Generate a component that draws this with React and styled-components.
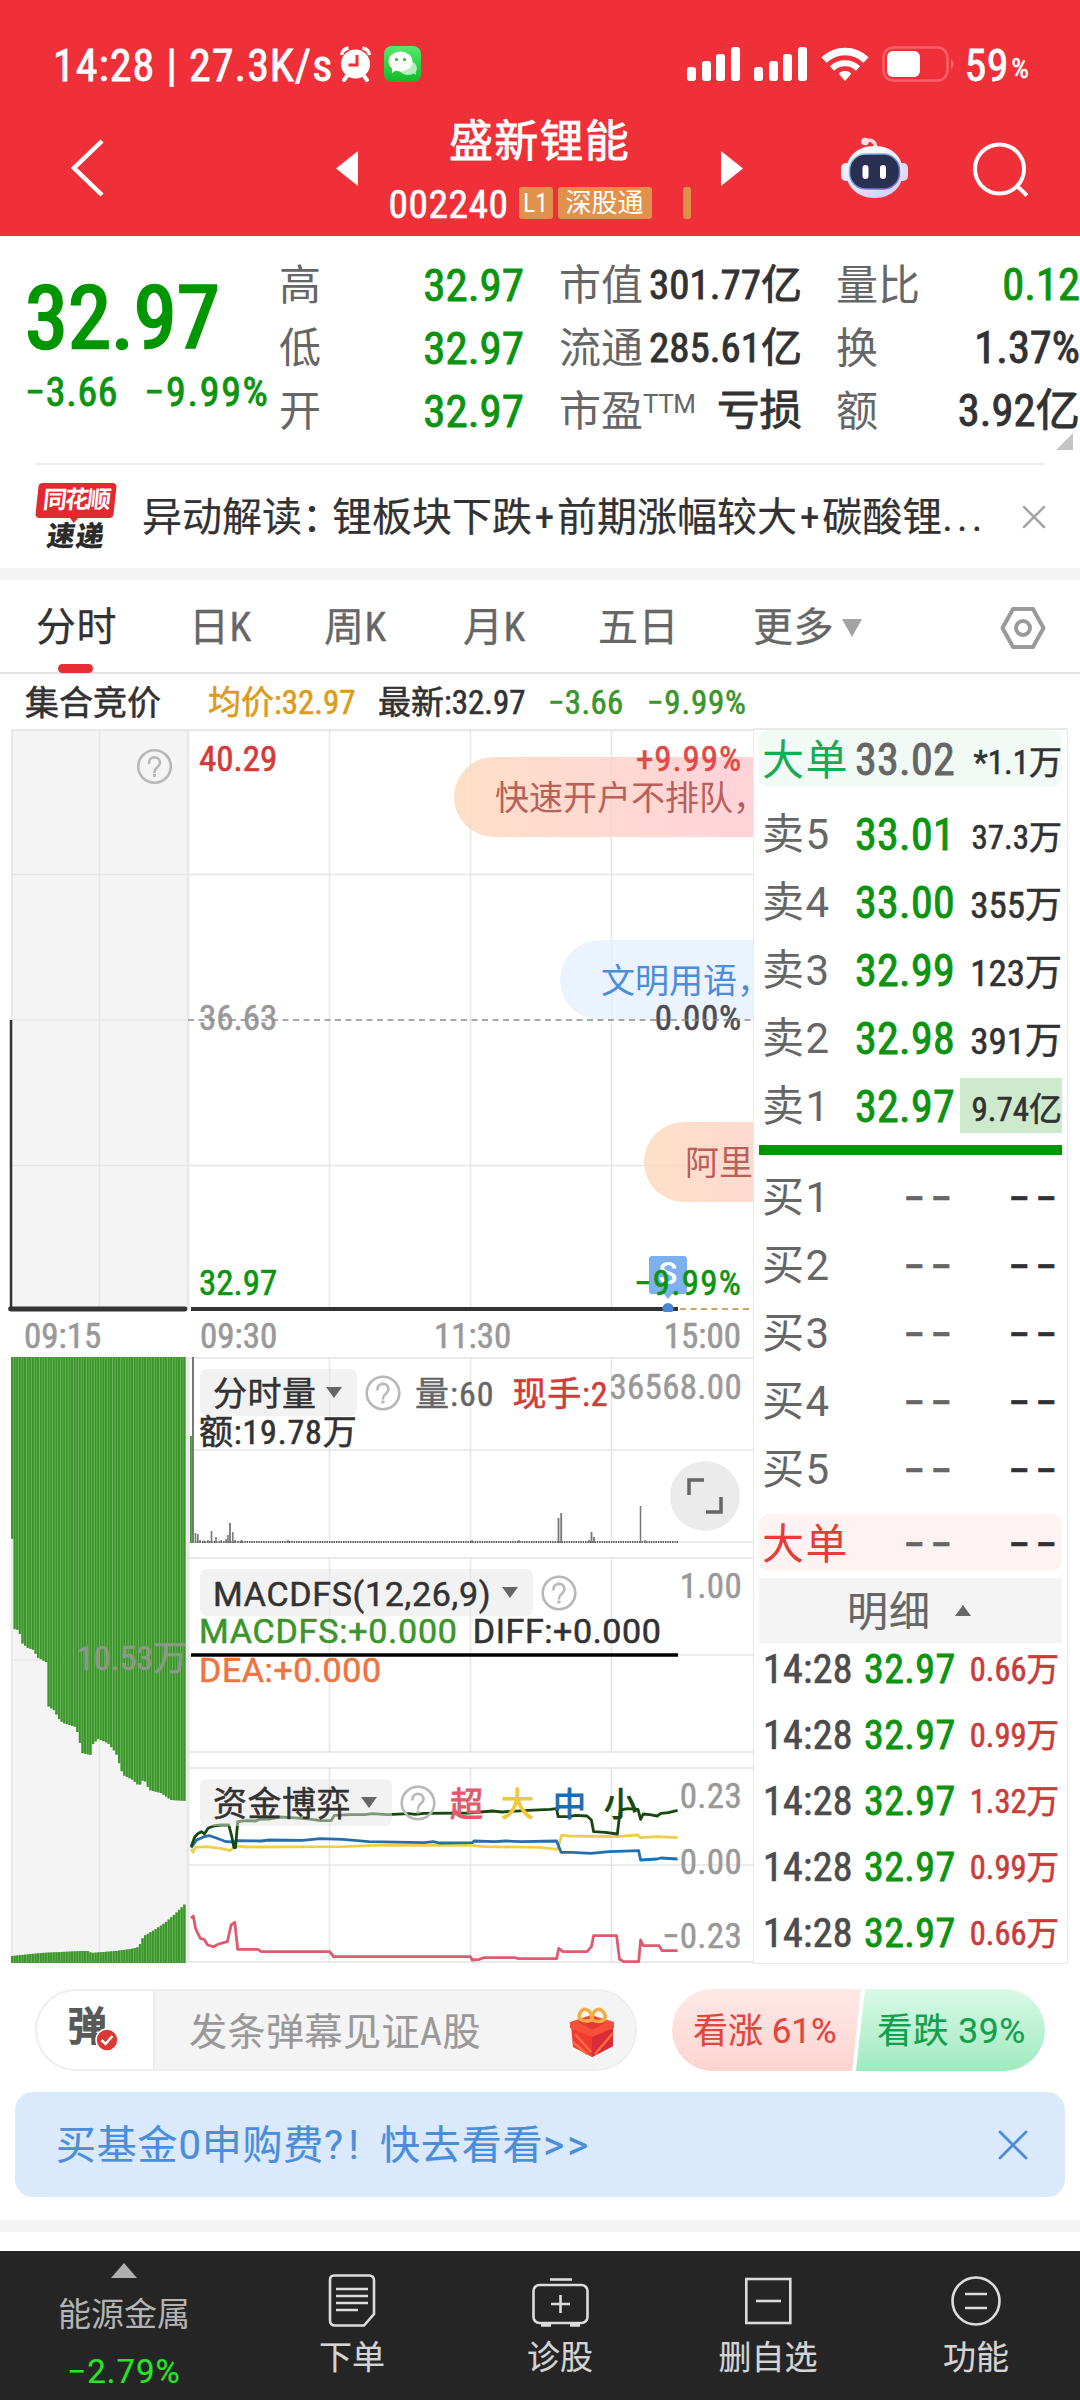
import React from "react";
import styled, { createGlobalStyle } from "styled-components";

const C = {
  red: "#f03038",
  up: "#d43a38",
  down: "#0b9410",
  ink: "#323232",
  mid: "#666666",
  soft: "#999999",
  line: "#e6e6e6",
  band: "#f4f4f4",
};

const Global = createGlobalStyle`
  *, *::before, *::after { box-sizing: border-box; }
  body {
    margin: 0;
    background: #fff;
    color: ${C.ink};
    font-family: "Roboto Condensed", "Noto Sans CJK SC", sans-serif;
  }
  svg { display: block; flex: none; overflow: visible; }
`;

const Page = styled.div`
  width: 1080px;
  height: 2400px;
  display: flex;
  flex-direction: column;
  overflow: hidden;
  background: #fff;
`;

const Text = styled.span`
  display: block;
  flex: none;
  padding-top: 3px;
  white-space: nowrap;
  line-height: 1;
  font-size: ${(p) => p.$size || 34}px;
  color: ${(p) => p.$color || C.ink};
  letter-spacing: ${(p) => p.$track || 0}px;
  margin-left: ${(p) => p.$left || 0}px;
  -webkit-text-stroke: ${(p) => p.$stroke || 0.2}px currentColor;
  ${(p) => (p.$wide ? 'font-family: Roboto, "Noto Sans CJK SC", sans-serif;' : "")}
`;

/* ---------- status bar and title bar ---------- */

const TopBar = styled.header`
  height: 236px;
  background: ${C.red};
  color: #fff;
  display: flex;
  flex-direction: column;
`;

const StatusBar = styled.div`
  height: 104px;
  padding: 24px 51px 0 53px;
  display: flex;
  align-items: center;
`;

const StatusGroup = styled.div`
  display: flex;
  align-items: center;
  gap: ${(p) => p.$gap}px;
  margin-left: ${(p) => (p.$end ? "auto" : "0")};
`;

const Percent = styled.span`
  padding-top: 10px;
  font-size: 28px;
  line-height: 1;
  -webkit-text-stroke: 0.5px currentColor;
`;

const TitleBar = styled.div`
  flex: 1;
  padding: 0 50px 0 71px;
  display: grid;
  grid-template-columns: 265px 407px 98px 67px 65px 57px;
`;

const TitleCell = styled.div`
  display: flex;
  height: 128px;
  align-items: center;
  grid-column: ${(p) => p.$col};
  justify-content: ${(p) => p.$justify || "flex-start"};
`;

const TitleStack = styled.div`
  width: 340px;
  height: 128px;
  display: flex;
  flex-direction: column;
  align-items: center;
  padding-top: 13px;
  gap: 18px;
`;

const CodeLine = styled.div`
  display: flex;
  align-items: center;
  width: 302px;
`;

const Badge = styled.span`
  height: 32px;
  flex: none;
  width: ${(p) => p.$w}px;
  margin-left: ${(p) => p.$left}px;
  border-radius: 3px;
  background: #e2914c;
  color: #fff;
  font-size: 26px;
  line-height: 33px;
  text-align: center;
  white-space: nowrap;
`;

/* ---------- quote summary ---------- */

const Quote = styled.section`
  height: 227px;
  padding-left: 25px;
  display: grid;
  grid-template-columns: 255px 280px 277px 243px;
  position: relative;
`;

const PriceBlock = styled.div`
  padding-top: 36px;
`;

const ChangeLine = styled.div`
  display: flex;
  gap: 26px;
  margin-top: 8px;
`;

const Metrics = styled.div`
  padding-top: 18px;
  padding-right: ${(p) => p.$right}px;
`;

const Metric = styled.div`
  height: 63px;
  display: flex;
  align-items: center;
  justify-content: space-between;
`;

const MetricLabel = styled.span`
  font-size: 42px;
  line-height: 1;
  margin-left: -1px;
  color: ${C.mid};
  white-space: nowrap;
  sup {
    font-size: 26px;
    line-height: 0;
    vertical-align: 13px;
    font-family: Roboto, sans-serif;
    letter-spacing: -0.5px;
  }
`;

const MetricValue = styled.span`
  font-size: ${(p) => p.$size || 42}px;
  line-height: 1;
  color: ${(p) => p.$color || C.ink};
  white-space: nowrap;
  -webkit-text-stroke: 0.9px currentColor;
`;

const Corner = styled.i`
  position: absolute;
  right: 7px;
  bottom: 13px;
  border-left: 17px solid transparent;
  border-bottom: 17px solid #c4c4c4;
`;

const News = styled.section`
  height: 105px;
  margin: 0 35px;
  border-top: 2px solid #ececec;
  display: flex;
  align-items: center;
`;

const Logo = styled.div`
  width: 82px;
  height: 68px;
  display: flex;
  flex-direction: column;
  align-items: center;
  margin-right: 25px;
`;

const LogoTop = styled.span`
  height: 35px;
  width: 78px;
  background: #e3292f;
  color: #fff;
  border-radius: 4px;
  transform: skewX(-6deg);
  font-size: 24px;
  font-weight: 700;
  line-height: 35px;
  letter-spacing: -2px;
  text-align: center;
  position: relative;
  &::after {
    content: "";
    position: absolute;
    left: 34px;
    top: 34px;
    border: 5px solid transparent;
    border-top: 6px solid #e3292f;
  }
`;

const LogoBottom = styled.span`
  transform: skewX(-8deg);
  font-size: 28px;
  font-weight: 900;
  line-height: 37px;
  letter-spacing: 1px;
  color: #2b2b2b;
`;

const Headline = styled.p`
  flex: 1;
  margin: 0;
  padding-top: 3px;
  font-size: 40px;
  line-height: 1;
  white-space: nowrap;
  -webkit-text-stroke: 0.2px currentColor;
`;

const Spaced = styled.span`
  letter-spacing: ${(p) => p.$by || 0}px;
  padding: 0 ${(p) => p.$pad || 0}px;
`;

const Band = styled.div`
  height: 12px;
  flex: none;
  margin-top: ${(p) => p.$top || 0}px;
  background: ${C.band};
`;

/* ---------- tabs ---------- */

const Tabs = styled.nav`
  height: 94px;
  border-bottom: 2px solid #e4e4e4;
  display: grid;
  grid-template-columns: 153px 135px 139px 135px 155px 248px 44px;
  padding-left: 36px;
`;

const Tab = styled.div`
  position: relative;
  display: flex;
  align-items: center;
  height: 94px;
  padding-top: 2px;
  font-size: 40px;
  line-height: 1;
  letter-spacing: 0.5px;
  white-space: nowrap;
  color: ${(p) => (p.$active ? C.ink : C.mid)};
  -webkit-text-stroke: 0.3px currentColor;
  &::after {
    content: "";
    display: ${(p) => (p.$active ? "block" : "none")};
    position: absolute;
    left: 22px;
    bottom: 1px;
    width: 35px;
    height: 9px;
    border-radius: 5px;
    background: #e62f34;
  }
`;

const Caret = styled.i`
  width: 0;
  height: 0;
  margin-left: ${(p) => p.$left || 0}px;
  border-left: ${(p) => p.$w / 2}px solid transparent;
  border-right: ${(p) => p.$w / 2}px solid transparent;
  border-top: ${(p) => (p.$up ? 0 : p.$h)}px solid ${(p) => p.$color};
  border-bottom: ${(p) => (p.$up ? p.$h : 0)}px solid ${(p) => p.$color};
`;

const InfoLine = styled.div`
  height: 54px;
  display: grid;
  grid-template-columns: 183px 170px 170px 99px 120px;
  align-items: center;
  padding-left: 25px;
`;

/* ---------- charts ---------- */

const Board = styled.main`
  height: 1238px;
  display: flex;
`;

const Charts = styled.div`
  width: 753px;
  padding-top: 1px;
  overflow: hidden;
`;

const PricePane = styled.div`
  position: relative;
  height: 583px;
  overflow: hidden;
`;

const Plot = styled.svg`
  position: absolute;
  left: 0;
  top: 0;
`;

const AxisLabel = styled.span`
  position: absolute;
  top: ${(p) => p.$y - 16.5}px;
  ${(p) => (p.$right !== undefined ? `right: ${p.$right}px;` : `left: ${p.$x}px;`)}
  font-size: ${(p) => p.$size || 35}px;
  line-height: 36px;
  color: ${(p) => p.$color || C.soft};
  letter-spacing: ${(p) => p.$track || 0}px;
  white-space: nowrap;
  -webkit-text-stroke: 0.6px currentColor;
`;

const Bubble = styled.div`
  position: absolute;
  left: ${(p) => p.$x}px;
  top: ${(p) => p.$y}px;
  right: 0;
  height: 80px;
  padding-left: 41px;
  border-radius: 40px 0 0 40px;
  font-size: 34px;
  line-height: 83px;
  white-space: nowrap;
  color: ${(p) => (p.$cool ? "#4a8ddb" : "#b9605b")};
  background: ${(p) =>
    p.$cool
      ? "rgba(226,238,253,.7)"
      : "linear-gradient(90deg, rgba(253,218,190,.85), rgba(255,200,206,.78) 270px)"};
`;

const Marker = styled.span`
  position: absolute;
  left: 649px;
  top: 527px;
  width: 38px;
  height: 38px;
  border-radius: 3px;
  background: #7db0ef;
  color: #fff;
  font: 500 31px/36px Roboto, sans-serif;
  text-align: center;
`;

const TimeAxis = styled.div`
  height: 45px;
  padding: 1px 12px 0 24px;
  display: grid;
  grid-template-columns: 176px 234px 1fr auto;
  align-items: center;
`;

const Lower = styled.div`
  display: flex;
`;

const AuctionPane = styled.div`
  position: relative;
  width: 188px;
  height: 606px;
`;

const Panes = styled.div`
  width: 565px;
  display: flex;
  flex-direction: column;
  gap: 14px;
`;

const Pane = styled.div`
  position: relative;
  height: ${(p) => p.$h}px;
  padding: 12px 12px 0 12px;
`;

const PaneHead = styled.div`
  position: relative;
  display: flex;
  align-items: center;
  height: 47px;
`;

const PaneLine = styled.div`
  position: relative;
  display: flex;
  height: 33px;
  align-items: center;
  margin-left: -1px;
  margin-top: ${(p) => p.$top || -2}px;
`;

const Chip = styled.div`
  width: ${(p) => p.$w}px;
  height: 47px;
  flex: none;
  padding-left: 13px;
  border-radius: 7px;
  display: flex;
  align-items: center;
  background: rgba(229, 229, 229, 0.5);
  margin-right: 8px;
`;

const PaneScale = styled.span`
  position: absolute;
  right: 11px;
  top: ${(p) => p.$y - 17}px;
  font-size: 35px;
  line-height: 36px;
  letter-spacing: 0.3px;
  color: ${C.soft};
  -webkit-text-stroke: 0.5px currentColor;
`;

const Expand = styled.div`
  position: absolute;
  right: 13px;
  top: 104px;
  width: 70px;
  height: 70px;
  border-radius: 50%;
  background: #ebebeb;
  display: flex;
  align-items: center;
  justify-content: center;
`;

/* ---------- order book ---------- */

const Book = styled.aside`
  width: 315px;
  height: 1236px;
  padding: 0 5px;
  border: 1px solid #e9e9e9;
  border-top-width: 2px;
  display: flex;
  flex-direction: column;
`;

const BookRow = styled.div`
  height: ${(p) => p.$h || 68}px;
  margin-top: ${(p) => p.$top || 0}px;
  padding-left: 3px;
  flex: none;
  display: grid;
  grid-template-columns: 93px 102px 1fr;
  align-items: center;
  border-radius: 10px;
  background: ${(p) => p.$bg || "transparent"};
`;

const Side = styled.span`
  padding-top: 4px;
  font-family: Roboto, "Noto Sans CJK SC", sans-serif;
  font-size: 42px;
  line-height: 1;
  letter-spacing: 1.5px;
  color: ${(p) => p.$color || C.mid};
  white-space: nowrap;
`;

const Price = styled.span`
  padding-top: 3px;
  font-size: 44px;
  line-height: 1;
  letter-spacing: 0.3px;
  color: ${(p) => p.$color || C.down};
  white-space: nowrap;
  -webkit-text-stroke: 0.9px currentColor;
`;

const Amount = styled.span`
  justify-self: ${(p) => (p.$trade ? "stretch" : "end")};
  width: ${(p) => (p.$trade ? "auto" : "102px")};
  height: 55px;
  padding-top: ${(p) => (p.$trade ? 4 : 6)}px;
  font-size: ${(p) => p.$size || 33}px;
  line-height: 51px;
  color: ${(p) => p.$color || C.ink};
  background: ${(p) => (p.$mark ? "#cdeacd" : "transparent")};
  text-align: right;
  white-space: nowrap;
  -webkit-text-stroke: 0.6px currentColor;
`;

const Dashes = styled.span`
  justify-self: end;
  padding-top: 4px;
  font-size: 45px;
  line-height: 1;
  letter-spacing: 4.5px;
  color: ${(p) => p.$color || C.ink};
  white-space: nowrap;
  -webkit-text-stroke: 0.7px currentColor;
`;

const Ratio = styled.div`
  height: 10px;
  margin: 6px 0 7px;
  flex: none;
  background: #009600;
`;

const DetailHead = styled.div`
  height: 65px;
  margin-top: 7px;
  flex: none;
  display: flex;
  align-items: center;
  padding-left: 88px;
  background: ${C.band};
`;

const TradeList = styled.div`
  margin-top: -2px;
`;

const Trade = styled.div`
  height: 66px;
  padding: 0 3px 14px 4px;
  display: grid;
  grid-template-columns: 101px 101px 1fr;
  align-items: center;
`;

/* ---------- comment bar, banner, bottom navigation ---------- */

const Social = styled.section`
  height: 126px;
  padding: 23px 35px 0;
  display: flex;
  justify-content: space-between;
`;

const Composer = styled.div`
  width: 602px;
  height: 82px;
  border: 2px solid #eee;
  border-radius: 41px;
  overflow: hidden;
  display: flex;
`;

const Toggle = styled.div`
  position: relative;
  width: 118px;
  border-right: 2px solid #ebebeb;
  padding: 14px 0 0 31px;
  svg {
    position: absolute;
    left: 58px;
    top: 37px;
  }
`;

const Field = styled.div`
  flex: 1;
  display: flex;
  align-items: center;
  justify-content: space-between;
  padding: 0 20px 0 34px;
  background: #f4f4f4;
  svg {
    margin-top: 6px;
  }
`;

const Vote = styled.div`
  width: 373px;
  height: 82px;
  display: flex;
`;

const VoteSide = styled.div`
  display: flex;
  align-items: center;
  width: ${(p) => (p.$up ? 189 : 192)}px;
  margin-left: ${(p) => (p.$up ? 0 : -8)}px;
  padding-left: ${(p) => (p.$up ? 21 : 24)}px;
  border-radius: ${(p) => (p.$up ? "41px 0 0 41px" : "0 41px 41px 0")};
  clip-path: ${(p) =>
    p.$up
      ? "polygon(0 0, 100% 0, 180px 100%, 0 100%)"
      : "polygon(12px 0, 100% 0, 100% 100%, 3px 100%)"};
  background: ${(p) =>
    p.$up
      ? "linear-gradient(#fee9e7, #fdd4cf)"
      : "linear-gradient(#daf9e8, #a0eac0)"};
`;

const Banner = styled.section`
  height: 105px;
  margin: 0 15px;
  flex: none;
  padding: 0 38px 0 41px;
  border-radius: 18px;
  background: #dae9fb;
  display: flex;
  align-items: center;
  justify-content: space-between;
`;

const BottomNav = styled.footer`
  height: 149px;
  margin-top: 19px;
  flex: none;
  background: #252525;
  display: grid;
  grid-template-columns: 248px repeat(4, 208px);
`;

const NavIndex = styled.div`
  display: flex;
  flex-direction: column;
  align-items: center;
  padding-top: 12px;
`;

const IndexName = styled.span`
  margin: 20px 0 21px;
  font-size: 33px;
  line-height: 1;
  color: #b4b4b4;
`;

const NavItem = styled.div`
  display: flex;
  flex-direction: column;
  align-items: center;
  padding-top: 23px;
  gap: 11px;
`;

/* ---------- icons ---------- */

const Signal = () => (
  <svg width="54" height="34" fill="#fff">
    <rect x="0" y="20" width="9" height="14" rx="3" />
    <rect x="15" y="14" width="9" height="20" rx="3" />
    <rect x="29" y="7" width="9" height="27" rx="3" />
    <rect x="44" y="0" width="9" height="34" rx="3" />
  </svg>
);

const Wifi = () => (
  <svg width="48" height="34" viewBox="0 0 48 34" fill="none" stroke="#fff" strokeWidth="7">
    <path d="M3 13a30 30 0 0 1 42 0" strokeWidth="7.500" />
    <path d="M11 21.500a19 19 0 0 1 26 0" strokeWidth="6" />
    <path d="M24 34l-6-7c0-4 12-4 12 0z" fill="#fff" stroke="none" />
  </svg>
);

const Battery = () => (
  <svg width="74" height="36">
    <rect x="1.500" y="1.500" width="64" height="33" rx="10" fill="none" stroke="#ff8287" strokeOpacity=".6" strokeWidth="2.500" />
    <rect x="5" y="5" width="33" height="26" rx="6" fill="#fff" />
    <path d="M69 13q5 5 0 10z" fill="#ff8287" opacity=".7" />
  </svg>
);

const Alarm = () => (
  <svg width="31" height="36" viewBox="0 0 31 36">
    <path d="M1.500 9q1-6 7-7M29.500 9q-1-6-7-7" stroke="#fff" strokeWidth="3.500" fill="none" />
    <path d="M7 30l-3 4M24 30l3 4" stroke="#fff" strokeWidth="4" strokeLinecap="round" />
    <circle cx="15.500" cy="18" r="14.500" fill="#fff" />
    <path d="M17 9v10H8.500" stroke={C.red} strokeWidth="3" fill="none" />
  </svg>
);

const WeChat = () => (
  <svg width="37" height="36" viewBox="0 0 37 36">
    <defs>
      <linearGradient id="wx" x2="0" y2="1">
        <stop stopColor="#57ea6c" />
        <stop offset="1" stopColor="#10b927" />
      </linearGradient>
    </defs>
    <rect width="37" height="36" rx="8" fill="url(#wx)" />
    <ellipse cx="24" cy="22" rx="9" ry="7" fill="#b5efbd" />
    <path d="M28 26l4 3-1-6z" fill="#b5efbd" />
    <ellipse cx="16.500" cy="15.500" rx="12" ry="10" fill="#fff" />
    <path d="M8 21l0 6 6-4z" fill="#fff" />
    <circle cx="12.500" cy="13.500" r="1.500" fill="#19b52e" />
    <circle cx="20.500" cy="13.500" r="1.500" fill="#19b52e" />
  </svg>
);

const Robot = () => (
  <svg width="67" height="62" viewBox="0 0 67 62">
    <defs>
      <linearGradient id="shell" x1=".3" x2=".7" y2="1">
        <stop stopColor="#fff" />
        <stop offset=".55" stopColor="#e9e8fb" />
        <stop offset="1" stopColor="#d0d1f5" />
      </linearGradient>
      <linearGradient id="rim" x2="1" y2="1">
        <stop stopColor="#7fdce6" />
        <stop offset="1" stopColor="#7a4fd0" />
      </linearGradient>
    </defs>
    <path d="M24 4q10-3 11 7" stroke="#f9d5df" strokeWidth="3.500" fill="none" />
    <circle cx="24" cy="4.500" r="3.800" fill="#f9dce6" />
    <rect x="0" y="26" width="12" height="18" rx="5" fill="#eeedfb" />
    <rect x="55" y="26" width="12" height="18" rx="5" fill="#dcdcf7" />
    <path d="M33.500 9C53 9 62 22 62 35S52 61 33.500 61 5 48 5 35 14 9 33.500 9z" fill="url(#shell)" />
    <rect x="8.500" y="17" width="50" height="35" rx="16" fill="#2a3052" stroke="url(#rim)" strokeWidth="1.500" />
    <rect x="21.500" y="28" width="6" height="14" rx="3" fill="#fff" />
    <rect x="39" y="28" width="6" height="14" rx="3" fill="#fff" />
  </svg>
);

const Cross = ({ size, color, width }) => (
  <svg width={size} height={size} stroke={color} strokeWidth={width} strokeLinecap="round">
    <path d={`M1 1L${size - 1} ${size - 1}M${size - 1} 1L1 ${size - 1}`} />
  </svg>
);

const HexNut = () => (
  <svg width="44" height="44" viewBox="0 0 44 44" fill="none" stroke="#9a9a9a" strokeWidth="4" strokeLinejoin="round">
    <path d="M12 3h20l10.500 19L32 41H12L1.500 22z" />
    <circle cx="22" cy="22" r="7" />
  </svg>
);

const Help = () => (
  <svg width="36" height="36" viewBox="0 0 36 36" fill="none" stroke="#b8b8b8" strokeWidth="2.600">
    <circle cx="18" cy="18" r="16.300" />
    <path d="M12.500 14.500c0-7.500 11-7.500 11 0 0 4-5.500 4-5.500 9" strokeLinecap="round" />
    <rect x="16.500" y="25.500" width="3" height="3" fill="#b8b8b8" stroke="none" />
  </svg>
);

const Gift = () => (
  <svg width="46" height="50" viewBox="0 0 46 50">
    <path d="M2 17l21 8 21-8v21L23 49 4 39z" fill="#ef3b33" />
    <path d="M23 25l21-8v21L23 49z" fill="#d92b38" />
    <path d="M4 34l14 12M6 26l16 18M44 25L26 46" stroke="#fb6b3f" strokeWidth="2.500" />
    <path d="M1 14l21-7 23 7v6l-22 9-22-9z" fill="#f6503c" />
    <path d="M9 14q14-10 28 1l-14 7z" fill="#e83a35" />
    <path d="M22 12C14 15 8 11 11 5s11-5 12 6c1-11 8-12 12-6s-2 11-12 7z" fill="none" stroke="#f5ad43" strokeWidth="3.500" />
  </svg>
);

const OrderIcon = () => (
  <svg width="48" height="53" viewBox="0 0 48 53" fill="none" stroke="#dcdcdc" strokeWidth="2.600">
    <path d="M6 1.500h35q5 0 5 5V40L36 51.500H7q-5 0-5-5V6q0-4.500 4-4.500z" />
    <path d="M8 15h32M8 22h32M8 29h32M8 36h22" />
  </svg>
);

const DiagnoseIcon = () => (
  <svg width="57" height="53" viewBox="0 0 57 53" fill="none" stroke="#dcdcdc" strokeWidth="2.600">
    <path d="M18 5.500h22" />
    <rect x="1.500" y="11" width="54" height="38" rx="6" />
    <path d="M28.500 21v18M19 30h19" />
    <path d="M9 51h10M38 51h10" strokeWidth="3.500" />
  </svg>
);

const RemoveIcon = () => (
  <svg width="47" height="53" viewBox="0 0 47 53" fill="none" stroke="#dcdcdc" strokeWidth="2.600">
    <rect x="1.300" y="5" width="44" height="44" />
    <path d="M11 27h25" />
  </svg>
);

const MoreIcon = () => (
  <svg width="50" height="53" viewBox="0 0 50 53" fill="none" stroke="#dcdcdc" strokeWidth="2.600">
    <circle cx="25" cy="27" r="23.500" />
    <path d="M14 20h22M14 34h22" />
  </svg>
);

/* ---------- data ---------- */

const asks = [
  ["卖5", "33.01", "37.3万", 33],
  ["卖4", "33.00", "355万", 37],
  ["卖3", "32.99", "123万", 37],
  ["卖2", "32.98", "391万", 37],
  ["卖1", "32.97", "9.74亿", 33],
];
const bids = ["买1", "买2", "买3", "买4", "买5"];
const trades = ["0.66万", "0.99万", "1.32万", "0.99万", "0.66万"];
const metrics = [
  { right: 36, size: 45, rows: [["高", "32.97", 1], ["低", "32.97", 1], ["开", "32.97", 1]] },
  { right: 35, size: 41, rows: [["市值", "301.77亿"], ["流通", "285.61亿"], ["市盈", "亏损", 0, "TTM"]] },
  { right: 0, size: 44.5, rows: [["量比", "0.12", 1], ["换", "1.37%"], ["额", "3.92亿"]] },
];
const navItems = [
  ["下单", OrderIcon],
  ["诊股", DiagnoseIcon],
  ["删自选", RemoveIcon],
  ["功能", MoreIcon],
];

const unmatched = [
  [11, 177], [13, 272], [18, 273], [21, 286], [27, 291], [33, 293], [36, 300], [43, 304], [46.9, 306],
  [47, 349], [54, 354], [57, 361], [62, 366], [75, 370], [78, 381], [81, 396], [90, 398], [92, 387],
  [97, 382], [107, 386], [115, 396], [119, 409], [122, 418], [132, 423], [138, 429], [142, 423],
  [145, 425], [148, 433], [160, 436], [170, 443], [186, 444],
];
const matched = [
  [11, 599], [40, 596], [80, 594], [88, 594], [90, 596], [115, 594], [130, 592], [138, 590], [140, 584],
  [143, 579], [155, 572], [165, 565], [175, 556], [186, 545],
];
const at = (pts, x) => {
  const i = Math.max(1, pts.findIndex((p) => p[0] >= x));
  const [x0, y0] = pts[i - 1];
  const [x1, y1] = pts[i];
  return y0 + ((y1 - y0) * (x - x0)) / (x1 - x0);
};
const auctionBars = Array.from({ length: 67 }, (_, i) => 11 + i * 2.61);

const spikes = [
  [5, 186, 2], [7.5, 10, 1.6], [9.8, 9, 1.6], [12, 3, 1.6], [16, 2.5, 1.5], [20, 3, 1.5], [23.5, 12, 1.6],
  [28, 6, 1.5], [33, 3, 1.5], [38, 4, 1.5], [40, 8, 1.5], [42, 20, 1.8], [44.8, 11, 1.5], [47, 3, 1.5],
  [53.5, 3, 1.5], [100, 3, 1.5], [284, 3, 1.5], [331, 3, 1.5], [370.5, 25, 1.8], [373.2, 30, 1.8],
  [401, 3, 1.5], [403.5, 11, 1.8], [406, 6, 1.8], [452.5, 37, 1.5], [457, 3, 1.5],
];

const trace = (s) =>
  s
    .split(" ")
    .map((pair) => {
      const [x, y] = pair.split(",").map(Number);
      return `${(x / 2.703 - 8).toFixed(1)},${(y / 3 - 97).toFixed(1)}`;
    })
    .join(" ");

const flows = [
  ["#eccf4c", "30,537 36,547 42,532 70,530 110,535 135,542 150,528 180,531 440,530 530,526 790,526 820,530 970,532 1020,538 1032,495 1050,498 1180,500 1238,495 1245,503 1290,500 1345,503"],
  ["#236fae", "30,533 45,510 65,500 80,497 100,505 125,515 145,516 155,512 220,513 240,510 330,511 380,506 440,508 510,515 660,518 685,515 700,519 790,518 795,513 850,515 880,513 920,515 1018,513 1030,547 1060,547 1110,550 1160,545 1240,542 1245,570 1290,567 1300,564 1345,567"],
  ["#17480d", "30,530 40,500 50,490 58,485 66,492 76,475 90,468 110,465 132,465 140,500 146,533 150,533 156,455 180,452 205,453 215,448 240,447 270,441 300,443 340,446 380,452 408,452 418,436 460,434 500,434 520,431 560,434 620,431 635,433 660,430 780,429 845,423 870,426 940,421 1000,418 1018,416 1022,440 1050,440 1070,436 1100,438 1112,450 1118,485 1150,487 1182,492 1190,420 1210,416 1238,418 1245,448 1252,432 1270,434 1290,438 1300,430 1320,428 1345,421"],
  ["#e05a6d", "30,745 36,738 42,775 55,805 65,808 75,825 90,830 105,822 128,815 138,765 148,757 156,838 210,838 220,845 405,845 415,860 785,860 790,870 810,868 820,863 905,863 915,866 1018,866 1024,835 1035,845 1100,845 1112,830 1118,797 1180,797 1188,868 1200,875 1240,875 1245,810 1252,827 1295,827 1303,842 1345,842"],
];

/* ---------- pieces ---------- */

const PaneGrid = ({ h, mid, children }) => (
  <Plot width="565" height={h}>
    <g stroke={C.line} strokeWidth="1.500">
      <path d={`M1 1H565M1 ${h - 1}H565`} stroke="#e9e9e9" strokeWidth="2" />
      <path d={`M1 ${mid}H565M141.500 0V${h}M282.500 0V${h}M423.500 0V${h}`} />
    </g>
    {children}
  </Plot>
);

const ChipLabel = ({ w, children, gap, track, wide }) => (
  <Chip $w={w}>
    <Text $size={34} $stroke={0.5} $track={track} $wide={wide}>{children}</Text>
    <Caret $w={17} $h={11} $left={gap} $color={C.mid} />
  </Chip>
);

export default function App() {
  return (
    <Page>
      <Global />
      <TopBar>
        <StatusBar>
          <StatusGroup $gap={13}>
            <StatusGroup $gap={7}>
              <Text $size={44} $color="#fff" $stroke={0.8} $track={1}>14:28 | 27.3K/s</Text>
              <Alarm />
            </StatusGroup>
            <WeChat />
          </StatusGroup>
          <StatusGroup $end $gap={13}>
            <Signal />
            <Signal />
            <Wifi />
            <StatusGroup $gap={8}>
              <Battery />
              <StatusGroup $gap={2}>
                <Text $size={44} $color="#fff" $stroke={0.8} $track={0.7}>59</Text>
                <Percent>%</Percent>
              </StatusGroup>
            </StatusGroup>
          </StatusGroup>
        </StatusBar>
        <TitleBar>
          <TitleCell>
            <svg width="33" height="56" fill="none" stroke="#fff" strokeWidth="4.500">
              <path d="M31 1L3 28l28 27" />
            </svg>
          </TitleCell>
          <TitleCell $justify="space-between">
            <svg width="22" height="35" fill="#fff"><path d="M22 0v35L0 17.500z" /></svg>
            <TitleStack>
              <Text $size={44} $color="#fff" $stroke={0.8} $track={1.3}>盛新锂能</Text>
              <CodeLine>
                <Text $size={39.5} $color="#fff" $stroke={0.6} $track={0.5}>002240</Text>
                <Badge $w={34} $left={10}>L1</Badge>
                <Badge $w={94} $left={5}>深股通</Badge>
                <Badge $w={8} $left={31} />
              </CodeLine>
            </TitleStack>
            <svg width="22" height="35" fill="#fff"><path d="M0 0v35L22 17.500z" /></svg>
          </TitleCell>
          <TitleCell $col={4}><Robot /></TitleCell>
          <TitleCell $col={6}>
            <svg width="57" height="57" fill="none" stroke="#fff" strokeWidth="4">
              <circle cx="26.500" cy="29" r="24.500" />
              <path d="M44 46l10 9.500" />
            </svg>
          </TitleCell>
        </TitleBar>
      </TopBar>

      <Quote>
        <PriceBlock>
          <Text $size={87} $color="#009600" $stroke={2.6}>32.97</Text>
          <ChangeLine>
            <Text $size={40} $color={C.down} $stroke={0.9} $track={0.7}>−3.66</Text>
            <Text $size={40} $color={C.down} $stroke={0.9} $track={1.7}>−9.99%</Text>
          </ChangeLine>
        </PriceBlock>
        {metrics.map((group) => (
          <Metrics key={group.rows[0][0]} $right={group.right}>
            {group.rows.map(([label, value, isDown, sup]) => (
              <Metric key={label}>
                <MetricLabel>{label}{sup && <sup>{sup}</sup>}</MetricLabel>
                <MetricValue $color={isDown ? C.down : C.ink} $size={sup ? 42.5 : group.size}>{value}</MetricValue>
              </Metric>
            ))}
          </Metrics>
        ))}
        <Corner />
      </Quote>

      <News>
        <Logo>
          <LogoTop>同花顺</LogoTop>
          <LogoBottom>速递</LogoBottom>
        </Logo>
        <Headline>
          异动解读<Spaced $by={-10}>：</Spaced>锂板块下跌<Spaced $pad={2.6}>+</Spaced>前期涨幅较大<Spaced $pad={2.6}>+</Spaced>碳酸锂<Spaced $by={4.3}>...</Spaced>
        </Headline>
        <Cross size={22} color="#a5a5a5" width={2.5} />
      </News>
      <Band />

      <Tabs>
        <Tab $active>分时</Tab>
        <Tab>日K</Tab>
        <Tab>周K</Tab>
        <Tab>月K</Tab>
        <Tab>五日</Tab>
        <Tab>更多<Caret $w={20} $h={18} $left={8} $color="#a3a3a3" /></Tab>
        <Tab><HexNut /></Tab>
      </Tabs>

      <InfoLine>
        <Text $size={34} $stroke={0.6}>集合竞价</Text>
        <Text $size={33} $color="#dc9b1b" $stroke={0.6}>均价:32.97</Text>
        <Text $size={33} $stroke={0.6}>最新:32.97</Text>
        <Text $size={33} $color="#3b952b" $stroke={0.6} $track={0.3}>−3.66</Text>
        <Text $size={33} $color="#3b952b" $stroke={0.6} $track={0.8}>−9.99%</Text>
      </InfoLine>

      <Board>
        <Charts>
          <PricePane>
            <Plot width="753" height="583">
              <rect x="11" y="0" width="177" height="580" fill={C.band} />
              <g stroke={C.line} strokeWidth="1.500" fill="none">
                <path d="M11 145.500H753M11 291H188M11 436.500H753M99.500 0V580M329.500 0V580M470.500 0V580M611.500 0V580" />
                <path d="M11 1H753" stroke="#e9e9e9" strokeWidth="2.500" />
                <path d="M12 0V580" />
                <path d="M188 0V580" stroke="#e9e9e9" strokeWidth="3" />
              </g>
            </Plot>
            <AxisLabel $x={199} $y={29.5} $color={C.up}>40.29</AxisLabel>
            <Bubble $x={454} $y={28}>快速开户不排队，</Bubble>
            <AxisLabel $right={11} $y={29.5} $color="#df4a48" $track={0.9}>+9.99%</AxisLabel>
            <Bubble $x={560} $y={211} $cool>文明用语，</Bubble>
            <Bubble $x={644} $y={393}>阿里</Bubble>
            <AxisLabel $x={199} $y={288}>36.63</AxisLabel>
            <AxisLabel $right={11} $y={288} $color="#4c4c52" $track={0.8}>0.00%</AxisLabel>
            <Marker>S</Marker>
            <AxisLabel $x={199} $y={553.5} $color={C.down}>32.97</AxisLabel>
            <AxisLabel $right={11} $y={553.5} $color={C.down} $track={1.2}>−9.99%</AxisLabel>
            <Plot width="753" height="583">
              <svg x="136.500" y="19.500"><Help /></svg>
              <path d="M188 291H753" stroke="#8c8c8c" strokeWidth="1.600" strokeDasharray="6 4.500" />
              <path d="M680 580H753" stroke="#cfa266" strokeWidth="1.800" strokeDasharray="6 4.500" />
              <path d="M664 565h8l-4 5z" fill="#7db0ef" />
            </Plot>
            <Plot width="753" height="583" fill="none" stroke="#333">
              <path d="M11 291V579" strokeWidth="2.500" />
              <path d="M10.500 580H185" strokeWidth="4.800" strokeLinecap="round" />
              <path d="M191 580H678" strokeWidth="4" />
              <circle cx="668" cy="579.500" r="5.500" fill="#4a86d6" stroke="none" />
            </Plot>
          </PricePane>

          <TimeAxis>
            <Text $size={35} $color={C.soft} $stroke={0.6}>09:15</Text>
            <Text $size={35} $color={C.soft} $stroke={0.6}>09:30</Text>
            <Text $size={35} $color={C.soft} $stroke={0.6}>11:30</Text>
            <Text $size={35} $color={C.soft} $stroke={0.6}>15:00</Text>
          </TimeAxis>

          <Lower>
            <AuctionPane>
              <Plot width="188" height="606">
                <rect x="11" y="0" width="177" height="606" fill={C.band} />
                <path d="M12 0V606M99.500 0V606M11 303H188" stroke={C.line} strokeWidth="1.500" />
                <path d="M188 0V606" stroke="#e9e9e9" strokeWidth="3" />
                {auctionBars.map((x) => (
                  <g key={x}>
                    <rect x={x} y="0" width="2.610" height={at(unmatched, x + 0.1)} fill="#68b857" />
                    <rect x={x} y="0" width="1.900" height={at(unmatched, x + 0.1)} fill="#3a942a" />
                    <rect x={x} y={at(matched, x + 0.1)} width="2.610" height={606 - at(matched, x + 0.1)} fill="#68b857" />
                    <rect x={x} y={at(matched, x + 0.1)} width="1.900" height={606 - at(matched, x + 0.1)} fill="#3a942a" />
                  </g>
                ))}
              </Plot>
              <AxisLabel $right={1} $y={299} $size={34} $color="#8e978b">10.53万</AxisLabel>
            </AuctionPane>

            <Panes>
              <Pane $h={186}>
                <PaneGrid h={186} mid={93}>
                  <path d="M7 185H490" stroke="#555" strokeWidth="2" strokeDasharray="1.300 1.050" />
                  <rect x="2" y="79" width="1.800" height="107" fill="#3a942a" />
                  {spikes.map(([x, h, w]) => (
                    <rect key={x} x={x - w / 2} y={186 - h} width={w} height={h} fill="#777" />
                  ))}
                </PaneGrid>
                <PaneScale $y={30}>36568.00</PaneScale>
                <PaneHead>
                  <ChipLabel w={157} gap={9} track={0.5}>分时量</ChipLabel>
                  <Help />
                  <Text $size={34} $left={14} $color={C.mid} $stroke={0.5} $track={1}>量:60</Text>
                  <Text $size={34} $left={18} $color={C.up} $stroke={0.6} $track={0.8}>现手:2</Text>
                </PaneHead>
                <PaneLine>
                  <Text $size={34} $stroke={0.6} $track={0.8}>额:19.78万</Text>
                </PaneLine>
                <Expand>
                  <svg width="36" height="36" fill="none" stroke="#666" strokeWidth="3.500">
                    <path d="M2 17V2h15M19 34h15V19" />
                  </svg>
                </Expand>
              </Pane>

              <Pane $h={196}>
                <PaneGrid h={196} mid={98} />
                <PaneScale $y={29}>1.00</PaneScale>
                <PaneHead>
                  <ChipLabel w={333} gap={11} track={0.7} wide>MACDFS(12,26,9)</ChipLabel>
                  <Help />
                </PaneHead>
                <PaneLine $top={-3}>
                  <Text $wide $size={34} $color="#3b952b" $stroke={0.6} $track={0.8}>MACDFS:+0.000</Text>
                  <Text $wide $size={34} $left={15} $stroke={0.6} $track={0.6}>DIFF:+0.000</Text>
                </PaneLine>
                <PaneLine $top={6}>
                  <Text $wide $size={34} $color="#ee7440" $stroke={0.6} $track={0.6}>DEA:+0.000</Text>
                </PaneLine>
                <Plot width="565" height="196">
                  <path d="M3 98H490" stroke="#000" strokeWidth="3.500" />
                </Plot>
              </Pane>

              <Pane $h={196}>
                <PaneGrid h={196} mid={98}>
                  {flows.map(([color, pts]) => (
                    <polyline key={color} points={trace(pts)} fill="none" stroke={color} strokeWidth="2.800" strokeLinejoin="round" />
                  ))}
                </PaneGrid>
                <PaneScale $y={28.5}>0.23</PaneScale>
                <PaneScale $y={94.5}>0.00</PaneScale>
                <PaneScale $y={168.5}>−0.23</PaneScale>
                <PaneHead>
                  <ChipLabel w={192} gap={10} track={0.5}>资金博弈</ChipLabel>
                  <Help />
                  <Text $size={33} $left={14} $color="#e05a6d" $stroke={1}>超</Text>
                  <Text $size={33} $left={18} $color="#f0c93a" $stroke={1}>大</Text>
                  <Text $size={33} $left={19} $color="#1f6bb0" $stroke={1}>中</Text>
                  <Text $size={33} $left={18} $color="#17480d" $stroke={1}>小</Text>
                </PaneHead>
              </Pane>
            </Panes>
          </Lower>
        </Charts>

        <Book>
          <BookRow $h={57} $bg="#f1faf5">
            <Side $color="#18aa55">大单</Side>
            <Price $color={C.mid}>33.02</Price>
            <Amount>*1.1万</Amount>
          </BookRow>
          {asks.map(([side, price, amount, size], i) => (
            <BookRow key={side} $top={i === 0 ? 12 : 0}>
              <Side>{side}</Side>
              <Price>{price}</Price>
              <Amount $size={size} $mark={i === 4}>{amount}</Amount>
            </BookRow>
          ))}
          <Ratio />
          {bids.map((side) => (
            <BookRow key={side}>
              <Side>{side}</Side>
              <Dashes $color={C.mid}>−−</Dashes>
              <Dashes>−−</Dashes>
            </BookRow>
          ))}
          <BookRow $h={57} $top={12} $bg="#fef3f2">
            <Side $color="#e23f38">大单</Side>
            <Dashes $color={C.mid}>−−</Dashes>
            <Dashes>−−</Dashes>
          </BookRow>
          <DetailHead>
            <Text $size={41} $color={C.mid} $track={1}>明细</Text>
            <Caret $up $w={16} $h={11} $left={24} $color={C.mid} />
          </DetailHead>
          <TradeList>
            {trades.map((amount, i) => (
              <Trade key={i}>
                <Text $size={40} $color="#4c4c4c" $stroke={0.7} $track={0.3}>14:28</Text>
                <Text $size={40} $color={C.down} $stroke={0.9} $track={0.4}>32.97</Text>
                <Amount $trade $size={32.5} $color="#c93c3a">{amount}</Amount>
              </Trade>
            ))}
          </TradeList>
        </Book>
      </Board>

      <Social>
        <Composer>
          <Toggle>
            <Text $size={39} $color="#595959" $stroke={2}>弹</Text>
            <svg width="24" height="24">
              <circle cx="12" cy="12" r="11" fill="#dd3934" stroke="#fff" strokeWidth="1.500" />
              <path d="M6.500 12l4 4 7-8" fill="none" stroke="#fff" strokeWidth="2.500" />
            </svg>
          </Toggle>
          <Field>
            <Text $size={38} $color={C.soft} $track={0.5}>发条弹幕见证A股</Text>
            <Gift />
          </Field>
        </Composer>
        <Vote>
          <VoteSide $up>
            <Text $wide $size={35} $color="#e2443e">看涨 61%</Text>
          </VoteSide>
          <VoteSide>
            <Text $wide $size={35.5} $color="#139f4c" $track={0.5}>看跌 39%</Text>
          </VoteSide>
        </Vote>
      </Social>

      <Banner>
        <Text $wide $size={40} $color="#4a8ddb" $track={0.8}>
          买基金0申购费<Spaced $by={5.6}>?! </Spaced>快去看看<Spaced $by={3}>&gt;&gt;</Spaced>
        </Text>
        <Cross size={28} color="#4a8ddb" width={2.8} />
      </Banner>
      <Band $top={23} />

      <BottomNav>
        <NavIndex>
          <Caret $up $w={26} $h={15} $color="#b0b0b0" />
          <IndexName>能源金属</IndexName>
          <Text $wide $size={33} $color="#26e626" $track={1}>−2.79%</Text>
        </NavIndex>
        {navItems.map(([label, Icon]) => (
          <NavItem key={label}>
            <Icon />
            <Text $size={33} $color="#d4d4d4">{label}</Text>
          </NavItem>
        ))}
      </BottomNav>
    </Page>
  );
}
